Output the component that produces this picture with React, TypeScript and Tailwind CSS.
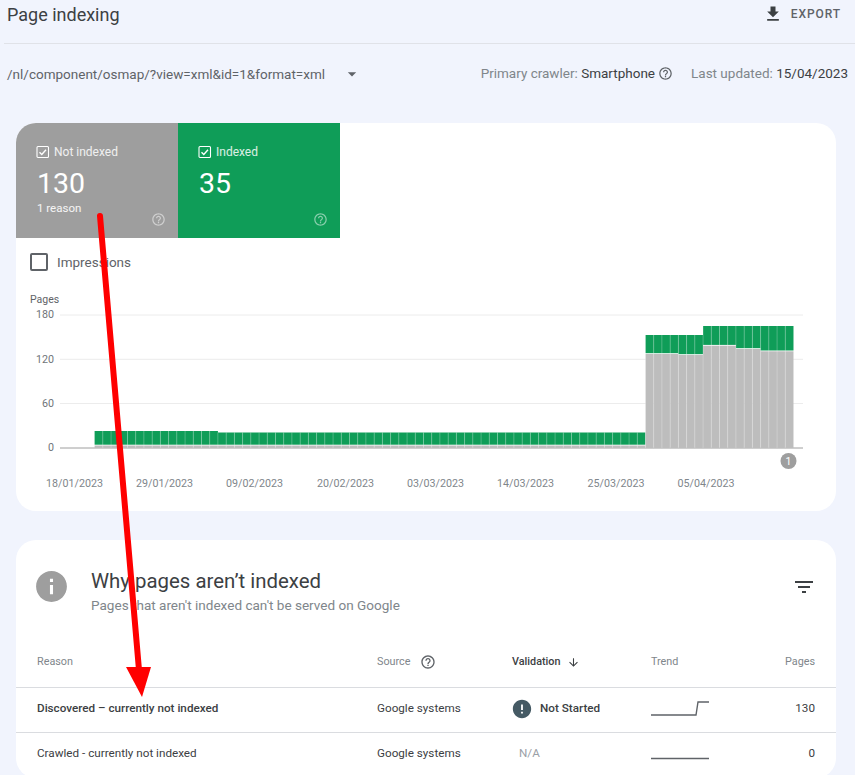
const HELP = "M11 18h2v-2h-2v2zm1-16C6.48 2 2 6.48 2 12s4.48 10 10 10 10-4.48 10-10S17.52 2 12 2zm0 18c-4.41 0-8-3.59-8-8s3.59-8 8-8 8 3.59 8 8-3.59 8-8 8zm0-14c-2.21 0-4 1.79-4 4h2c0-1.1.9-2 2-2s2 .9 2 2c0 2-3 1.75-3 5h2c0-2.25 3-2.5 3-5 0-2.21-1.79-4-4-4z";

function Icon({ d, className }: { d: string; className: string }) {
  return (
    <svg viewBox="0 0 24 24" className={className} fill="currentColor">
      <path d={d} />
    </svg>
  );
}

function TileCheck() {
  return (
    <svg viewBox="0 0 14 14" className="w-[14px] h-[14px] shrink-0" fill="none" stroke="white">
      <rect x="1" y="1.5" width="11.5" height="11" rx="1" strokeWidth="1.1" />
      <path d="M3.5 7.2 L5.8 9.4 L10 4.8" strokeWidth="1.4" />
    </svg>
  );
}

function Tile({ label, value, sub, color }: { label: string; value: string; sub?: string; color: string }) {
  return (
    <div className={`relative w-[162px] h-[115px] pl-[20px] pt-[22px] text-white ${color}`}>
      <div className="flex items-center gap-[4px] text-[12px] leading-[14px] text-white/85">
        <TileCheck />
        <span>{label}</span>
      </div>
      <div className="text-[28.5px] leading-[32px] mt-[9px] ml-[1px] text-white">{value}</div>
      {sub && <div className="text-[11.5px] leading-[14px] mt-[1px] ml-[1px] text-white/90">{sub}</div>}
      <Icon d={HELP} className="absolute right-[12px] bottom-[11px] w-[15px] h-[15px] text-white/50" />
    </div>
  );
}

const BX = 94.6;
const BW = 148 / 18;
type Bar = { g: number; t: number };
const bars: Bar[] = [];
for (let i = 0; i < 15; i++) bars.push({ g: 445.5, t: 431 });
for (let i = 0; i < 52; i++) bars.push({ g: 445.5, t: 432.5 });
const tail: [number, number, number][] = [
  [4, 354, 335],
  [3, 355, 335],
  [4, 345.7, 326],
  [3, 349, 326],
  [4, 351.3, 326],
];
for (const [n, g, t] of tail) for (let i = 0; i < n; i++) bars.push({ g, t });

function Chart() {
  const dates = [
    ["18/01/2023", 74.5],
    ["29/01/2023", 164.5],
    ["09/02/2023", 254.5],
    ["20/02/2023", 345.5],
    ["03/03/2023", 435.5],
    ["14/03/2023", 525.5],
    ["25/03/2023", 616],
    ["05/04/2023", 706],
  ] as [string, number][];
  const ys = [
    ["180", 315],
    ["120", 359.3],
    ["60", 403.5],
    ["0", 448],
  ] as [string, number][];
  return (
    <svg width="818" height="225" viewBox="16 286 818 225" className="block" style={{ fontFamily: "Roboto, sans-serif" }}>
      <text x="30" y="303" fontSize="10.5" fill="#5f6368">Pages</text>
      {ys.map(([l, y]) => (
        <g key={l}>
          <line x1="60" x2="803" y1={y} y2={y} stroke={l === "0" ? "#9e9e9e" : "#ececec"} strokeWidth="1" />
          <text x="54" y={y + 3.4} fontSize="10.7" fill="#70757a" textAnchor="end">{l}</text>
        </g>
      ))}
      {bars.map((b, i) => {
        const x = BX + i * BW;
        return (
          <g key={i}>
            <rect x={x} y={b.g} width={BW} height={448 - b.g} fill="#bdbdbd" />
            <rect x={x} y={b.t} width={BW} height={b.g - b.t - 0.8} fill="#0f9d58" />
            {i > 0 && <line x1={x} x2={x} y1={b.t} y2={448} stroke="white" strokeOpacity="0.22" strokeWidth="1" />}
          </g>
        );
      })}
      {dates.map(([d, x]) => (
        <text key={d} x={x} y="487" fontSize="10.7" fill="#80868b" textAnchor="middle">{d}</text>
      ))}
      <circle cx="788.5" cy="461" r="8" fill="#9e9e9e" />
      <text x="788.5" y="465" fontSize="10.5" fill="white" textAnchor="middle">1</text>
    </svg>
  );
}

const COLS = "grid grid-cols-[340px_135px_139px_1fr_60px] items-center pl-[21px] pr-[21px]";

function Row({ reason, bold, status, trend, pages }: { reason: string; bold?: boolean; status: React.ReactNode; trend: string; pages: string }) {
  return (
    <div className={`${COLS} h-[45px] pb-[2px] border-t border-[#dadce0] text-[11.7px] text-[#3c4043]`}>
      <span className={bold ? "font-medium text-[#3c4043]" : ""}>{reason}</span>
      <span>Google systems</span>
      {status}
      <svg width="58" height="18" viewBox="0 0 58 18" fill="none" stroke="#5f6368" strokeWidth="1.4">
        <path d={trend} />
      </svg>
      <span className="text-right">{pages}</span>
    </div>
  );
}

export default function App() {
  return (
    <div className="relative w-[855px] h-[775px] overflow-hidden bg-[#f1f4fd] text-[#3c4043]" style={{ fontFamily: "Roboto, sans-serif" }}>
      <header className="ml-[4px] h-[44px] border-b border-[#e0e2e8] flex items-start justify-between pl-[3px] pr-[14px] pt-[3px]">
        <h1 className="text-[18px] leading-[24px] text-[#3c4043]">Page indexing</h1>
        <div className="flex items-center gap-[8px] h-[22px] text-[12px] tracking-[0.9px] font-medium text-[#5f6368]">
          <Icon d="M19 9h-4V3H9v6H5l7 7 7-7zM5 18v2h14v-2H5z" className="w-[20px] h-[20px] text-[#3c4043]" />
          <span>EXPORT</span>
        </div>
      </header>

      <div className="h-[79px] pl-[7px] pr-[7px] pt-[20px] flex items-start justify-between">
        <div className="flex items-center">
          <span className="text-[13.5px] leading-[18px] text-[#5f6368]">/nl/component/osmap/?view=xml&amp;id=1&amp;format=xml</span>
          <Icon d="M7 10l5 5 5-5z" className="ml-[17px] w-[20px] h-[20px] text-[#5f6368]" />
        </div>
        <div className="flex items-center text-[13.5px] leading-[18px]">
          <span className="text-[#80868b]">Primary crawler:&nbsp;</span>
          <span className="text-[#3c4043]">Smartphone</span>
          <Icon d={HELP} className="ml-[3px] w-[15px] h-[15px] text-[#5f6368]" />
          <span className="ml-[18px] text-[#80868b]">Last updated:&nbsp;</span>
          <span className="text-[#3c4043]">15/04/2023</span>
        </div>
      </div>

      <section className="ml-[16px] mr-[19px] h-[388px] bg-white rounded-[20px] overflow-hidden">
        <div className="flex">
          <Tile label="Not indexed" value="130" sub="1 reason" color="bg-[#9e9e9e]" />
          <Tile label="Indexed" value="35" color="bg-[#0f9d58]" />
        </div>
        <div className="flex items-center h-[48px] pl-[14px]">
          <div className="w-[18px] h-[18px] rounded-[2px] border-2 border-[#5f6368]" />
          <span className="ml-[9px] text-[13.5px] text-[#5f6368]">Impressions</span>
        </div>
        <Chart />
      </section>

      <section className="ml-[16px] mr-[19px] mt-[29px] h-[238px] bg-white rounded-[20px] overflow-hidden">
        <div className="h-[99px] relative flex pl-[20px] pt-[30px]">
          <Icon d="M12 2C6.48 2 2 6.48 2 12s4.48 10 10 10 10-4.48 10-10S17.52 2 12 2zm1 15h-2v-6h2v6zm0-8h-2V7h2v2z" className="w-[37px] h-[37px] text-[#9e9e9e] mt-[-2px] mr-[21px] ml-[-3px]" />
          <div>
            <h2 className="text-[20.4px] leading-[24px] text-[#3c4043] mt-[-1px]">Why pages aren’t indexed</h2>
            <p className="text-[13.55px] leading-[18px] mt-[3px] text-[#80868b]">Pages that aren't indexed can't be served on Google</p>
          </div>
          <Icon d="M10 18h4v-2h-4v2zM3 6v2h18V6H3zm3 7h12v-2H6v2z" className="absolute right-[20px] top-[35px] w-[24px] h-[24px] text-[#3c4043]" />
        </div>
        <div className={`${COLS} h-[48px] pb-[2px] text-[10.8px] text-[#80868b]`}>
          <span>Reason</span>
          <span className="flex items-center gap-[10px]">Source <Icon d={HELP} className="w-[16px] h-[16px] text-[#5f6368]" /></span>
          <span className="flex items-center gap-[7px] font-medium text-[#3c4043]">Validation <Icon d="M20 12l-1.41-1.41L13 16.17V4h-2v12.17l-5.58-5.59L4 12l8 8 8-8z" className="w-[13px] h-[13px] text-[#3c4043]" /></span>
          <span>Trend</span>
          <span className="text-right">Pages</span>
        </div>
        <Row
          reason="Discovered – currently not indexed"
          bold
          status={
            <span className="flex items-center gap-[7px] font-medium ml-[-1px]">
              <Icon d="M12 2C6.48 2 2 6.48 2 12s4.48 10 10 10 10-4.48 10-10S17.52 2 12 2zm1 15h-2v-2h2v2zm0-4h-2V7h2v6z" className="w-[22px] h-[22px] text-[#455a64]" />
              Not Started
            </span>
          }
          trend="M0 15 H45 L47 2 H58"
          pages="130"
        />
        <Row
          reason="Crawled - currently not indexed"
          status={<span className="text-[#9aa0a6] ml-[7px]">N/A</span>}
          trend="M0 13.5 H58"
          pages="0"
        />
      </section>

      <svg className="absolute left-0 top-0 pointer-events-none" width="855" height="775" viewBox="0 0 855 775">
        <line x1="100" y1="216" x2="139" y2="670" stroke="#ff0000" strokeWidth="6" strokeLinecap="round" />
        <polygon points="126,667 151,667 142,697" fill="#ff0000" />
      </svg>
    </div>
  );
}
